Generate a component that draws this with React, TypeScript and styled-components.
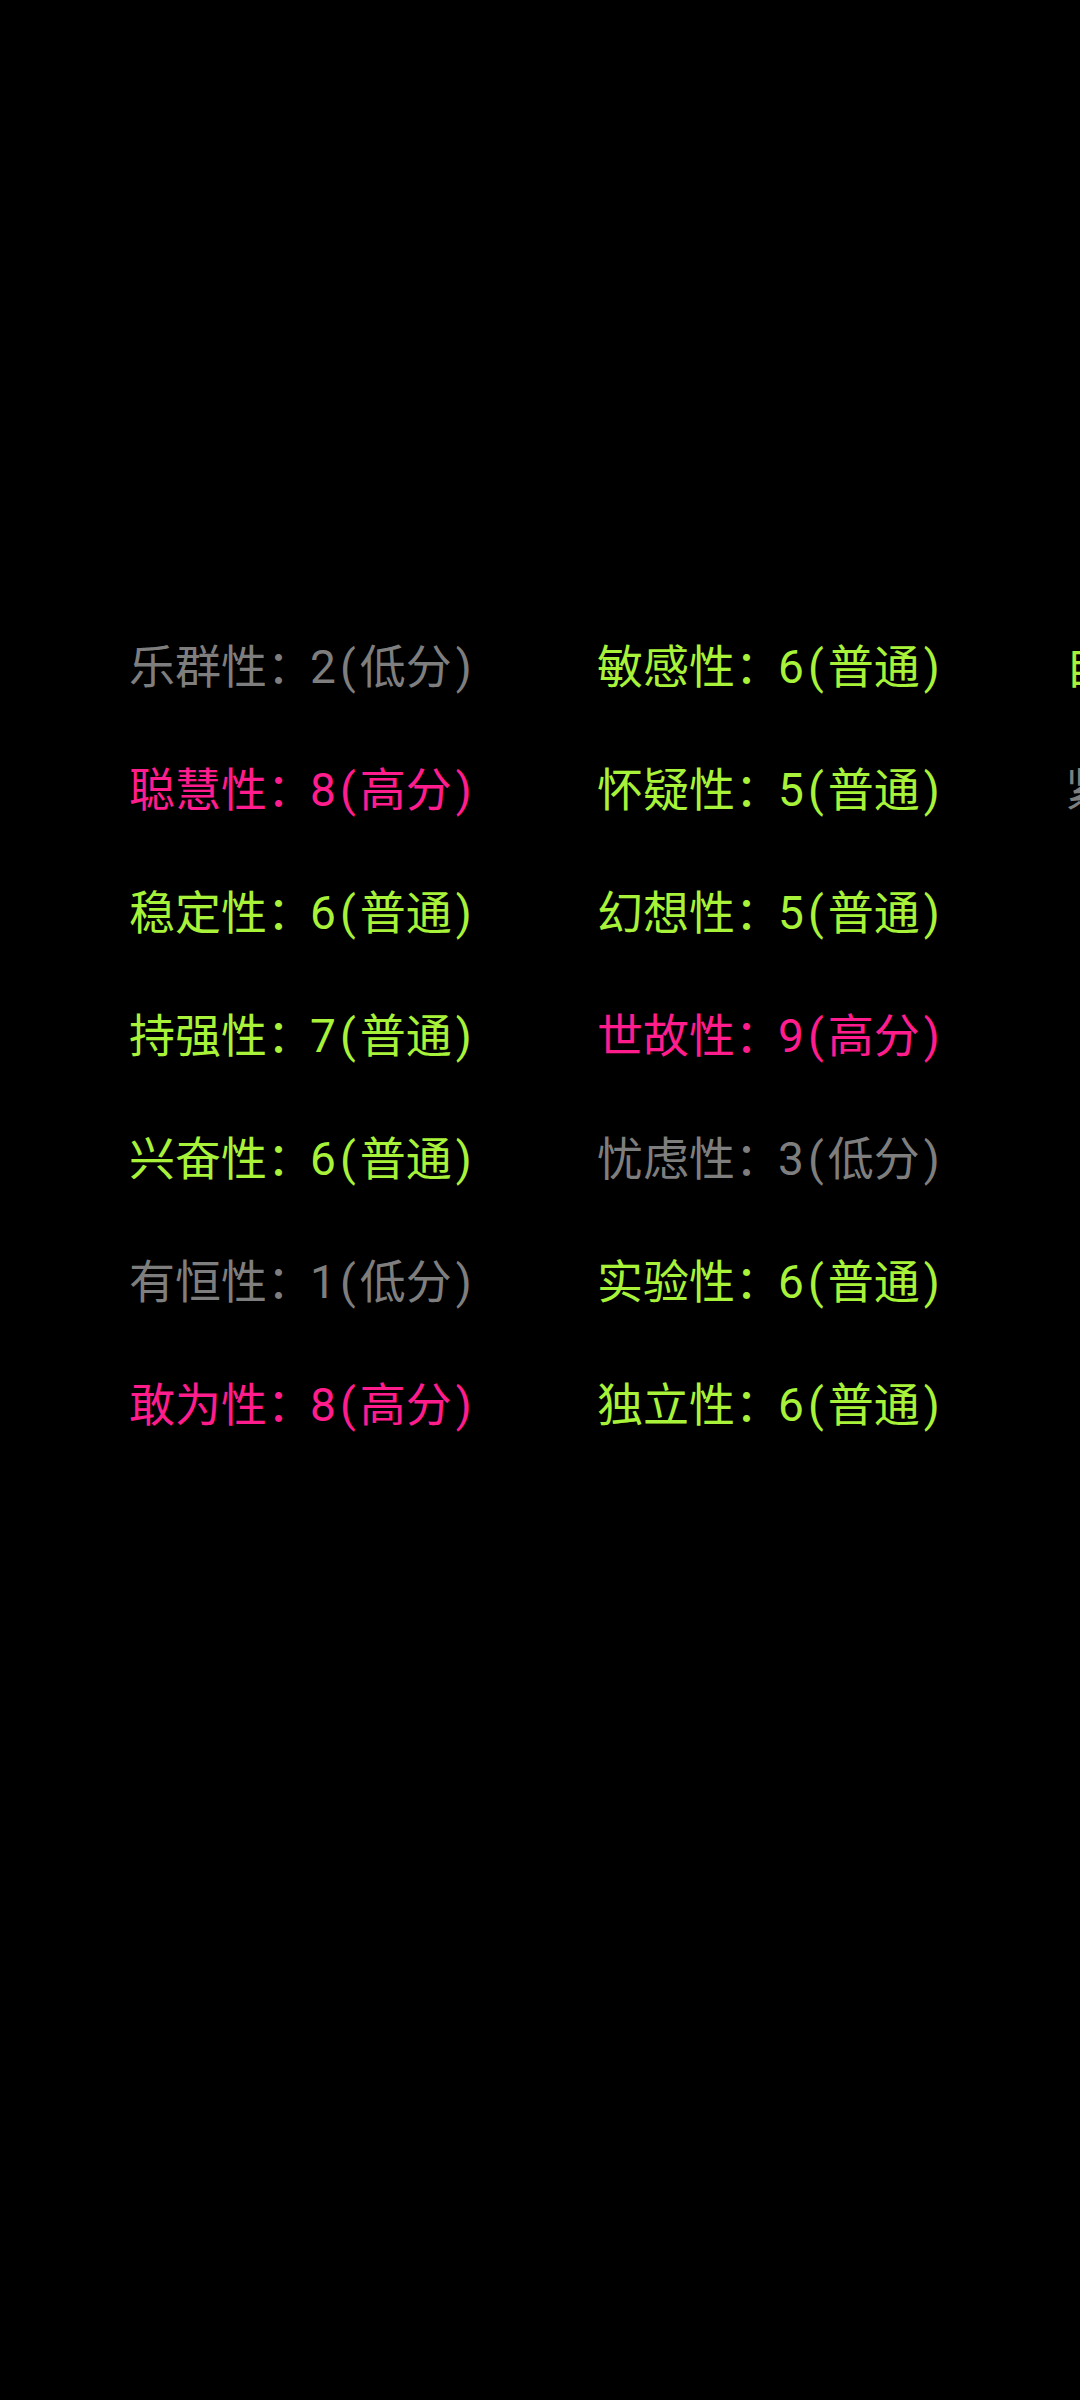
import React from "react";
import styled, { createGlobalStyle } from "styled-components";

const Global = createGlobalStyle`
  html, body {
    margin: 0;
    padding: 0;
    background: #000;
    overflow: hidden;
  }
  #root {
    width: 1080px;
    min-height: 2400px;
    background: #000;
    overflow: hidden;
  }
`;

const Page = styled.div`
  width: 1080px;
  height: 2400px;
  background: #000;
  overflow: hidden;
  padding: 603px 0 0 129px;
  box-sizing: border-box;
`;

const Grid = styled.div`
  display: grid;
  grid-auto-flow: column;
  grid-template-rows: repeat(7, 123px);
  grid-auto-columns: 468px;
  width: max-content;
`;

type Level = "low" | "mid" | "high";

const colors: Record<Level, string> = {
  low: "#7e7e7e",
  mid: "#a8f23a",
  high: "#ff1d8e",
};

const Item = styled.div<{ $level: Level }>`
  display: flex;
  align-items: center;
  white-space: nowrap;
  font-family: "Noto Sans CJK SC", sans-serif;
  font-size: 46px;
  line-height: 66px;
  color: ${(p) => colors[p.$level]};
`;

const Line = styled.span`
  display: block;
`;

const Score = styled.span`
  font-family: Roboto, "Noto Sans CJK SC", sans-serif;
  margin-left: -3px;
`;

const Paren = styled.span`
  display: inline-block;
  width: 24px;
  text-align: center;
  font-family: Roboto, "Noto Sans CJK SC", sans-serif;
`;

const labelOf: Record<Level, string> = {
  low: "低分",
  mid: "普通",
  high: "高分",
};

const levelOf = (v: number): Level => (v <= 3 ? "low" : v >= 8 ? "high" : "mid");

const factors: [string, number][] = [
  ["乐群性", 2],
  ["聪慧性", 8],
  ["稳定性", 6],
  ["持强性", 7],
  ["兴奋性", 6],
  ["有恒性", 1],
  ["敢为性", 8],
  ["敏感性", 6],
  ["怀疑性", 5],
  ["幻想性", 5],
  ["世故性", 9],
  ["忧虑性", 3],
  ["实验性", 6],
  ["独立性", 6],
  ["自律性", 6],
  ["紧张性", 3],
];

export default function App() {
  return (
    <>
      <Global />
      <Page>
        <Grid>
          {factors.map(([name, v]) => {
            const lv = levelOf(v);
            return (
              <Item key={name} $level={lv}>
                <Line>
                  {name}：<Score>{v}</Score>
                  <Paren>(</Paren>
                  {labelOf[lv]}
                  <Paren>)</Paren>
                </Line>
              </Item>
            );
          })}
        </Grid>
      </Page>
    </>
  );
}
